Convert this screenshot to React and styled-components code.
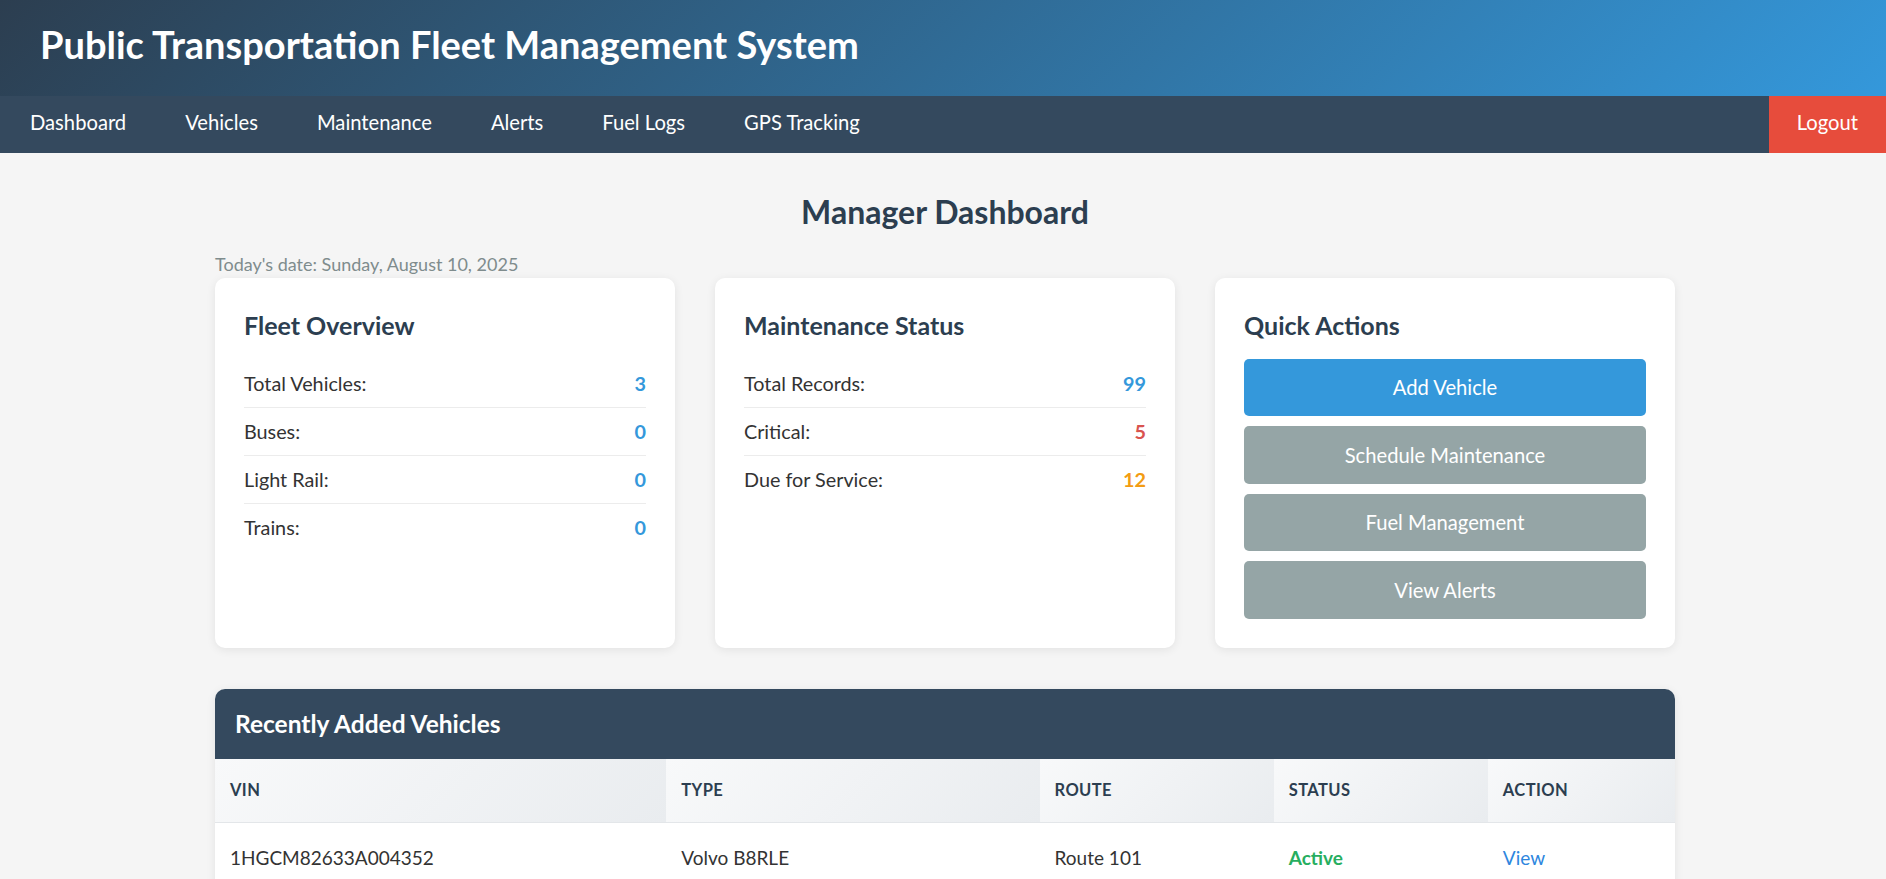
import React from 'react';
import styled, { createGlobalStyle } from 'styled-components';

const GlobalStyle = createGlobalStyle`
  * { box-sizing: border-box; }
  body {
    margin: 0;
    background: #f5f5f5;
    font-family: Lato, "Noto Sans", sans-serif;
    font-size: 19.2px;
    color: #333;
  }
`;

const Header = styled.header`
  height: 96px;
  display: flex;
  align-items: center;
  padding: 0 40px;
  background: linear-gradient(135deg, #2c3e50 0%, #3498db 100%);
`;

const Title = styled.h1`
  margin: 0;
  margin-top: -9px;
  color: #fff;
  font-size: 38px;
  font-weight: 700;
`;

const Nav = styled.nav`
  height: 57px;
  display: flex;
  background: #34495e;
`;

const NavLink = styled.a`
  display: flex;
  align-items: center;
  padding: 0 29.5px 6px;
  color: #fff;
  text-decoration: none;
  font-size: 20.2px;
  &:first-child { padding-left: 30px; }
`;

const Logout = styled(NavLink)`
  margin-left: auto;
  background: #e74c3c;
  padding: 0 28px 6px;
`;

const Main = styled.main`
  max-width: 1500px;
  margin: 0 auto;
  padding: 35px 18px 0 22px;
`;

const PageTitle = styled.h2`
  margin: 0 0 17px;
  text-align: center;
  color: #2c3e50;
  font-size: 32px;
  font-weight: 700;
  line-height: 48px;
`;

const DateLine = styled.p`
  margin: 0 0 2.5px;
  color: #7f8c8d;
  font-size: 18px;
  line-height: 22px;
`;

const CardGrid = styled.div`
  display: grid;
  grid-template-columns: repeat(3, 1fr);
  gap: 40px;
`;

const Card = styled.section`
  background: #fff;
  border-radius: 10px;
  box-shadow: 0 2px 10px rgba(0, 0, 0, 0.08);
  padding: 29px;
`;

const CardTitle = styled.h3`
  margin: 0 0 17px;
  color: #2c3e50;
  font-size: 25px;
  font-weight: 700;
  line-height: 36px;
`;

const StatRow = styled.div`
  display: flex;
  justify-content: space-between;
  align-items: center;
  padding: 9.5px 0;
  line-height: 28px;
  border-bottom: 1px solid #ececec;
  &:last-child { border-bottom: none; }
`;

const StatLabel = styled.span`
  color: #333;
  font-size: 19.8px;
`;

const StatValue = styled.span`
  color: ${p => p.color};
  font-weight: 700;
  font-size: 19.8px;
`;

const ActionList = styled.div`
  display: flex;
  flex-direction: column;
  gap: 10px;
  margin-top: -1px;
`;

const ActionButton = styled.button`
  height: 57.5px;
  border: none;
  border-radius: 5px;
  background: ${p => (p.primary ? '#3498db' : '#95a5a6')};
  color: #fff;
  font-family: inherit;
  font-size: 20.2px;
  cursor: pointer;
`;

const TablePanel = styled.section`
  margin-top: 41px;
  background: #fff;
  border-radius: 10px 10px 0 0;
  box-shadow: 0 2px 10px rgba(0, 0, 0, 0.08);
  overflow: hidden;
`;

const PanelHeader = styled.div`
  height: 70px;
  display: flex;
  align-items: center;
  padding: 0 20px;
  background: #34495e;
  color: #fff;
  font-size: 24.5px;
  font-weight: 700;
`;

const Table = styled.table`
  width: 100%;
  border-collapse: collapse;
  table-layout: fixed;
`;

const Th = styled.th`
  width: ${p => p.w}px;
  height: 64px;
  padding: 0 15px;
  text-align: left;
  background: linear-gradient(135deg, #f8f9fa 0%, #e9ecef 100%);
  color: #2c3e50;
  font-size: 16.5px;
  font-weight: 700;
  letter-spacing: 0.4px;
  text-transform: uppercase;
  border-bottom: 1px solid #e3e6e9;
`;

const Td = styled.td`
  height: 70px;
  padding: 0 15px;
  font-size: 19px;
  color: #333;
`;

const Status = styled.span`
  color: #27ae60;
  font-weight: 700;
`;

const ViewLink = styled.a`
  color: #2e86de;
  text-decoration: none;
`;

const fleet = [
  ['Total Vehicles:', 3],
  ['Buses:', 0],
  ['Light Rail:', 0],
  ['Trains:', 0],
];

const maintenance = [
  ['Total Records:', 99, '#3498db'],
  ['Critical:', 5, '#d9534f'],
  ['Due for Service:', 12, '#f39c12'],
];

const columns = [
  ['VIN', 451],
  ['Type', 373],
  ['Route', 234],
  ['Status', 214],
  ['Action', 187],
];

export default function App() {
  return (
    <>
      <GlobalStyle />
      <Header>
        <Title>Public Transportation Fleet Management System</Title>
      </Header>
      <Nav>
        {['Dashboard', 'Vehicles', 'Maintenance', 'Alerts', 'Fuel Logs', 'GPS Tracking'].map(l => (
          <NavLink key={l} href="#">{l}</NavLink>
        ))}
        <Logout href="#">Logout</Logout>
      </Nav>
      <Main>
        <PageTitle>Manager Dashboard</PageTitle>
        <DateLine>Today's date: Sunday, August 10, 2025</DateLine>
        <CardGrid>
          <Card>
            <CardTitle>Fleet Overview</CardTitle>
            {fleet.map(([label, val]) => (
              <StatRow key={label}>
                <StatLabel>{label}</StatLabel>
                <StatValue color="#3498db">{val}</StatValue>
              </StatRow>
            ))}
          </Card>
          <Card>
            <CardTitle>Maintenance Status</CardTitle>
            {maintenance.map(([label, val, color]) => (
              <StatRow key={label}>
                <StatLabel>{label}</StatLabel>
                <StatValue color={color}>{val}</StatValue>
              </StatRow>
            ))}
          </Card>
          <Card>
            <CardTitle>Quick Actions</CardTitle>
            <ActionList>
              <ActionButton primary>Add Vehicle</ActionButton>
              <ActionButton>Schedule Maintenance</ActionButton>
              <ActionButton>Fuel Management</ActionButton>
              <ActionButton>View Alerts</ActionButton>
            </ActionList>
          </Card>
        </CardGrid>
        <TablePanel>
          <PanelHeader>Recently Added Vehicles</PanelHeader>
          <Table>
            <thead>
              <tr>
                {columns.map(([c, w]) => <Th key={c} w={w}>{c}</Th>)}
              </tr>
            </thead>
            <tbody>
              <tr>
                <Td>1HGCM82633A004352</Td>
                <Td>Volvo B8RLE</Td>
                <Td>Route 101</Td>
                <Td><Status>Active</Status></Td>
                <Td><ViewLink href="#">View</ViewLink></Td>
              </tr>
            </tbody>
          </Table>
        </TablePanel>
      </Main>
    </>
  );
}
